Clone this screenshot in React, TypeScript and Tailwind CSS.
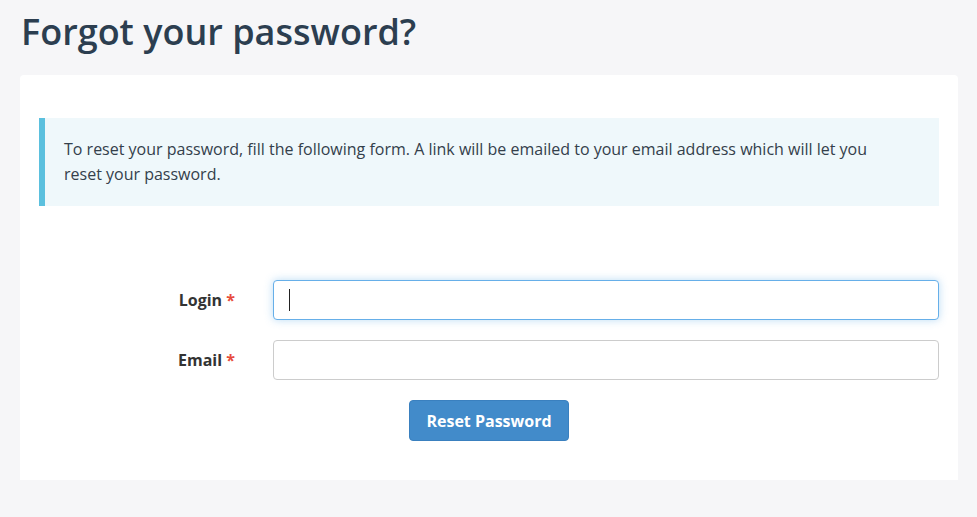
export default function App() {
  return (
    <div className="min-h-[517px] bg-[#f6f6f8] font-['Open_Sans',sans-serif] text-[#333]">
      <h1 className="pl-[21px] pt-[12px] pb-[23px] text-[36px] leading-[40px] font-semibold text-[#2c3e50]">
        Forgot your password?
      </h1>
      <div className="ml-[20px] mr-[19px] rounded-t-[4px] bg-white px-[19px] pt-[43px] pb-[39px]">
        <div className="border-l-[6px] border-[#5bc0de] bg-[#eff8fb] py-[19px] pl-[19px] pr-[40px] text-[16px] leading-[25px] text-[#34404b]">
          To reset your password, fill the following form. A link will be emailed to your email address which will let you
          reset your password.
        </div>
        <form className="mt-[74px] flex flex-col gap-[20px]">
          <div className="flex items-center">
            <label className="w-[234px] pr-[38px] text-right text-[16px] font-bold text-[#333]">
              Login <span className="text-[#e74c3c]">*</span>
            </label>
            <div className="relative flex-1">
              <input
                type="text"
                className="h-[40px] w-full rounded-[4px] border border-[#66afe9] bg-white px-3 text-[16px] shadow-[0_0_8px_rgba(102,175,233,0.45)] outline-none"
              />
              <div className="pointer-events-none absolute left-[16px] top-[9px] h-[22px] w-[1px] bg-[#222]" />
            </div>
          </div>
          <div className="flex items-center">
            <label className="w-[234px] pr-[38px] text-right text-[16px] font-bold text-[#333]">
              Email <span className="text-[#e74c3c]">*</span>
            </label>
            <input
              type="text"
              className="h-[40px] flex-1 rounded-[4px] border border-[#cccccc] bg-white px-3 text-[16px] outline-none"
            />
          </div>
          <div className="flex justify-center">
            <button
              type="button"
              className="h-[41px] w-[160px] rounded-[4px] border border-[#3a80bf] bg-[#428bca] text-[16px] font-bold text-white"
            >
              Reset Password
            </button>
          </div>
        </form>
      </div>
    </div>
  );
}
